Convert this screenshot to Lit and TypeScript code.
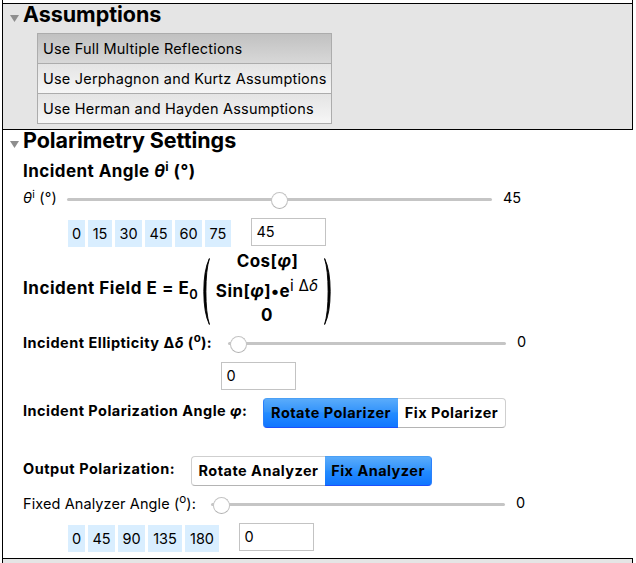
import { LitElement, html, css } from "lit";
import { customElement, property } from "lit/decorators.js";

@customElement("value-slider")
class ValueSlider extends LitElement {
  @property({ type: Number }) offset = 0;
  static styles = css`
    :host { display: block; height: 17px; }
    .bar { display: flex; align-items: center; height: 17px; position: relative; }
    .track { flex: 1; height: 3px; border-radius: 1.5px; background: #c5c5c5; }
    .knob {
      position: absolute; top: 1px; width: 17px; height: 17px; box-sizing: border-box;
      border-radius: 50%; background: #fff; border: 1px solid #c3c3c3; border-bottom-color: #b0b0b0;
    }
  `;
  render() {
    return html`<div class="bar"><div class="track"></div><div class="knob" style="left:${this.offset}px"></div></div>`;
  }
}

@customElement("preset-bar")
class PresetBar extends LitElement {
  @property({ attribute: false }) values: number[] = [];
  static styles = css`
    :host { display: flex; gap: 3px; }
    .preset {
      height: 27px; line-height: 27px; background: #d9eeff; color: #000; text-align: center;
      width: 27px; letter-spacing: 0;
    }
    .d1 { width: 17px; }
    .d3 { width: 34px; }
    .slim { width: 24px; }
    .edge { width: 26px; }
  `;
  render() {
    return this.values.map(
      (v) => html`<div class="preset d${String(v).length} ${v === 15 ? "slim" : v === 75 ? "edge" : ""}">${v}</div>`
    );
  }
}

@customElement("toggle-bar")
class ToggleBar extends LitElement {
  @property({ attribute: false }) options: { label: string; width: number }[] = [];
  @property({ type: Number }) selected = 0;
  static styles = css`
    :host { display: flex; height: 30px; }
    .opt {
      box-sizing: border-box; height: 30px; line-height: 28px; text-align: center; font-weight: 700;
      letter-spacing: 0.47px;
      background: #fff; border: 1px solid #cfcfcf; border-bottom-color: #b4b4b4; white-space: nowrap;
    }
    .opt:first-child { border-radius: 4px 0 0 4px; border-right: 0; }
    .opt:last-child { border-radius: 0 4px 4px 0; border-left: 0; }
    .on {
      background: linear-gradient(#5cadfb, #3494fb 45%, #248cff 50%, #0f74ff);
      border-color: #4ba0f5 #2b80fb #1e50fa;
      background-origin: border-box;
    }
  `;
  render() {
    return this.options.map(
      (o, i) => html`<div class="opt ${i === this.selected ? "on" : ""}" style="width:${o.width}px">${o.label}</div>`
    );
  }
}

@customElement("app-root")
class AppRoot extends LitElement {
  static styles = css`
    :host {
      display: block; width: 636px; height: 563px; overflow: hidden; background: #fff; color: #000;
      font-family: Inter, "Noto Sans", "Liberation Sans", sans-serif; font-size: 14.5px; line-height: 20px;
    }
    .page { margin-left: 2px; height: 563px; border-left: 1px solid #000; display: flex; flex-direction: column; }
    .top { height: 3px; flex: none; width: 629px; border-right: 1px solid #000; }
    .gray { background: #e5e5e5; border-top: 1px solid #000; border-right: 1px solid #000; width: 629px; flex: none; }
    .assume { height: 125px; border-bottom: 1px solid #000; }
    .settings { height: 428px; flex: none; }
    .next { height: 5px; border-top: 1px solid #000; }
    .head { display: flex; height: 20px; }
    .arrow { width: 9px; height: 7px; margin: 11px 0 0 7px; background: #8e8e8e; clip-path: polygon(0 0, 100% 0, 50% 100%); }
    .title { font-size: 21.5px; font-weight: 700; line-height: 20px; margin-left: 4px; letter-spacing: -0.05px; white-space: nowrap; }
    .choices { margin: 9px 0 0 34px; width: 293px; border: 1px solid #acacac; }
    .choice { height: 29px; line-height: 29px; padding-left: 5px; letter-spacing: 0.2px; background: linear-gradient(#e4e4e4, #f6f6f6); white-space: nowrap; }
    .choice + .choice { border-top: 1px solid #acacac; }
    .chosen { background: linear-gradient(#c1c1c1, #d8d8d8); }
    .row { display: flex; align-items: flex-start; padding-left: 20px; white-space: nowrap; box-sizing: border-box; }
    .b { font-weight: 700; letter-spacing: 0.5px; }
    .lead { font-size: 17px; font-weight: 700; letter-spacing: 0.45px; }
    i { font-style: italic; }
    sup, sub { font-size: 0.72em; line-height: 0; vertical-align: 0; position: relative; }
    sup { top: -0.5em; }
    sub { top: 0.4em; }
    .deg { font-size: 0.8em; top: -0.5em; letter-spacing: 0; }
    .label { flex: none; }
    .value { margin-left: 11px; }
    .field { box-sizing: border-box; width: 75px; height: 28px; border: 1px solid #c3c3c3; padding-left: 4.5px; line-height: 26px; background: #fff; flex: none; }

    .r-angle { height: 41px; padding-top: 11px; }
    .r-theta { height: 27px; }
    .r-theta .label { width: 44px; margin-top: -3px; letter-spacing: 0.2px; }
    .r-theta value-slider { width: 425px; }
    .r-theta .value { margin-top: -3px; }
    .r-presets { height: 36px; padding-left: 65px; }
    .r-presets preset-bar { margin: 2px 20px 0 0; }
    .r-field { height: 81px; }
    .r-field .label { margin-top: 24px; width: 180px; letter-spacing: 0.52px; }
    .r-field .label sub { font-size: 0.76em; font-weight: 600; }
    .paren { width: 7px; height: 67px; margin-top: 4px; display: block; flex: none; }
    .matrix { width: 114px; display: flex; flex-direction: column; align-items: center; }
    .matrix div { height: 24px; line-height: 20px; }
    .matrix .c { height: 30px; margin-top: -3px; padding-left: 1px; }
    .matrix .m { font-weight: 700; letter-spacing: 0.4px; }
    .matrix .s { height: 20px; }
    .thin { font-weight: 400; font-size: 0.9em; top: -0.38em; letter-spacing: 0.2px; }
    .r-ell { height: 27px; }
    .r-ell .label { width: 205px; margin-top: -2px; letter-spacing: 0.48px; }
    .r-ell value-slider { width: 278px; }
    .r-ell .value { margin-top: -3px; }
    .r-ellfield { height: 36px; padding-left: 218px; }
    .r-pol { height: 58px; }
    .r-pol .label { width: 240px; margin-top: 3px; letter-spacing: 0.47px; }
    .r-out { height: 40px; }
    .r-out .label { width: 168px; margin-top: 3px; letter-spacing: 0.53px; }
    .r-fix { height: 27px; }
    .r-fix .label { width: 188px; margin-top: -2px; letter-spacing: 0.1px; }
    .r-fix value-slider { width: 294px; }
    .r-fix .value { margin-top: -3px; }
    .r-last { padding-left: 65px; }
    .r-last preset-bar { margin: 2px 20px 0 0; }
  `;
  render() {
    return html`
      <div class="page">
        <div class="top"></div>
        <section class="gray assume">
          <div class="head"><div class="arrow"></div><div class="title">Assumptions</div></div>
          <div class="choices">
            <div class="choice chosen">Use Full Multiple Reflections</div>
            <div class="choice">Use Jerphagnon and Kurtz Assumptions</div>
            <div class="choice">Use Herman and Hayden Assumptions</div>
          </div>
        </section>
        <section class="settings">
          <div class="head"><div class="arrow"></div><div class="title">Polarimetry Settings</div></div>
          <div class="row r-angle lead"><div class="label">Incident Angle <i>θ</i><sup>i</sup> (°)</div></div>
          <div class="row r-theta">
            <div class="label"><i>θ</i><sup>i</sup> (°)</div>
            <value-slider .offset=${204}></value-slider>
            <div class="value">45</div>
          </div>
          <div class="row r-presets">
            <preset-bar .values=${[0, 15, 30, 45, 60, 75]}></preset-bar>
            <div class="field">45</div>
          </div>
          <div class="row r-field lead">
            <div class="label">Incident Field E = E<sub>0</sub></div>
            <svg class="paren" viewBox="0 0 7 67"><path d="M6.4 0.5 Q0.8 12 0.8 33.5 T6.4 66.5 Q2.9 55 2.9 33.5 T6.4 0.5Z" stroke="#000" stroke-width=".9" /></svg>
            <div class="matrix">
              <div class="c">Cos[<i>φ</i>]</div>
              <div class="m">Sin[<i>φ</i>]•e<sup class="thin">i Δ<i>δ</i></sup></div>
              <div class="s">0</div>
            </div>
            <svg class="paren" viewBox="0 0 7 67"><path d="M0.6 0.5 Q6.2 12 6.2 33.5 T0.6 66.5 Q4.1 55 4.1 33.5 T0.6 0.5Z" stroke="#000" stroke-width=".9" /></svg>
          </div>
          <div class="row r-ell">
            <div class="label b">Incident Ellipticity Δ<i>δ</i> (<sup class="deg">o</sup>):</div>
            <value-slider .offset=${2}></value-slider>
            <div class="value">0</div>
          </div>
          <div class="row r-ellfield"><div class="field">0</div></div>
          <div class="row r-pol">
            <div class="label b">Incident Polarization Angle <i>φ</i>:</div>
            <toggle-bar .options=${[{ label: "Rotate Polarizer", width: 135 }, { label: "Fix Polarizer", width: 108 }]} .selected=${0}></toggle-bar>
          </div>
          <div class="row r-out">
            <div class="label b">Output Polarization:</div>
            <toggle-bar .options=${[{ label: "Rotate Analyzer", width: 134 }, { label: "Fix Analyzer", width: 107 }]} .selected=${1}></toggle-bar>
          </div>
          <div class="row r-fix">
            <div class="label">Fixed Analyzer Angle (<sup class="deg">o</sup>):</div>
            <value-slider .offset=${2}></value-slider>
            <div class="value">0</div>
          </div>
          <div class="row r-last">
            <preset-bar .values=${[0, 45, 90, 135, 180]}></preset-bar>
            <div class="field">0</div>
          </div>
        </section>
        <section class="gray next"></section>
      </div>
    `;
  }
}
